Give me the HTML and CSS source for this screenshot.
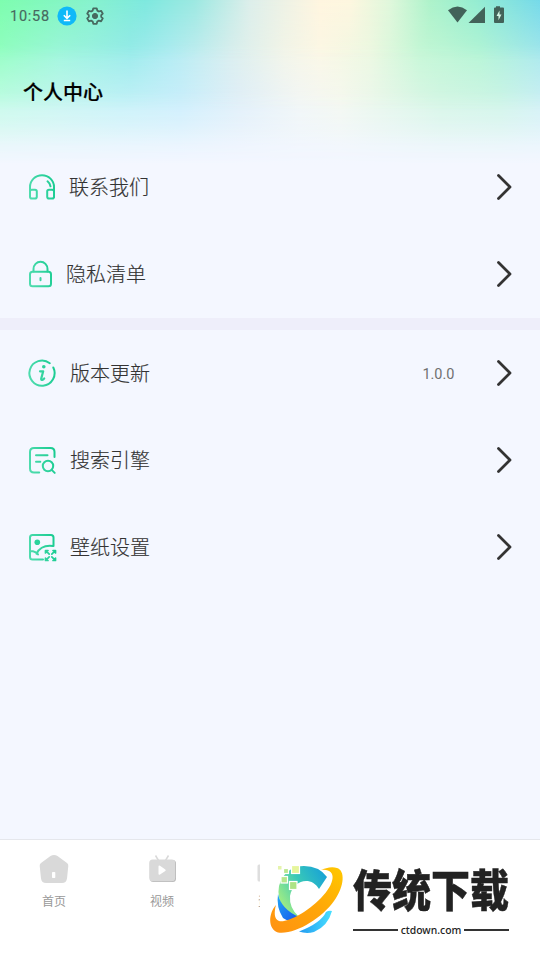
FILE: index.html
```html
<!DOCTYPE html>
<html lang="zh-CN">
<head>
<meta charset="utf-8">
<title>个人中心</title>
<link rel="stylesheet" href="styles.css">
</head>
<body>
<div class="screen">
  <div class="glow"><i class="g4"></i><i class="g3"></i><i class="g2"></i><i class="g1"></i></div>
  <header class="status">
    <span class="clock">10:58</span>
    <svg class="dl" width="20" height="20" viewBox="0 0 20 20"><circle cx="10" cy="10" r="9.600" fill="#0fb9f8"/><path d="M10 4.500v7.500M6.800 9.200l3.200 3.200 3.200-3.200M6.800 14.500h6.400" fill="none" stroke="#fff" stroke-width="1.600"/></svg>
    <svg class="gear" width="20" height="20" viewBox="0 0 20 20" fill="none" stroke="#47695f" stroke-width="1.800" stroke-linejoin="round"><path d="M8.300 2.300h3.400l.6 2.300 1.600.9 2.200-.7 1.700 2.900-1.600 1.500v1.700l1.600 1.500-1.700 2.900-2.200-.7-1.600.9-.6 2.300H8.300l-.6-2.300-1.600-.9-2.200.7-1.700-2.900 1.600-1.500V9.200L2.200 7.700l1.700-2.900 2.200.7 1.600-.9z"/><circle cx="10" cy="10" r="2.600" fill="#47695f" stroke-width="1"/></svg>
    <svg class="signals" width="58" height="18" viewBox="0 0 58 18" fill="#426259"><path d="M0 4.200Q9.500-3.200 19 4.200L9.500 16.500z"/><path d="M37 .8V17H20.500z"/><path d="M48 .2h4v1.300h3q1 0 1 1v13.500q0 1-1 1H47q-1 0-1-1V2.500q0-1 1-1h1z"/><path d="M51.500 4.500L48.500 10h2v4.200l3-5.700h-2z" fill="#d4f5e6"/></svg>
  </header>
  <h1>个人中心</h1>
  <svg class="defs" width="0" height="0"><defs><linearGradient id="green" gradientUnits="userSpaceOnUse" x1="0" y1="14" x2="28" y2="8"><stop stop-color="#4fdcae"/><stop offset="1" stop-color="#16cb90"/></linearGradient></defs></svg>
  <main>
    <section class="group">
      <div class="row contact">
        <svg class="icon" width="28" height="28" viewBox="0 0 28 28"><path d="M2 17.500V14a12 11.800 0 0 1 24 0v10M19.500 8.300q2.500 2 3 5"/><rect x="2" y="16.700" width="6.800" height="8.800" rx="1.800"/><rect x="19.200" y="16.700" width="6.800" height="8.800" rx="1.800"/></svg>
        <span class="label">联系我们</span>
        <svg class="arrow" width="16" height="28" viewBox="0 0 16 28"><path d="M2.500 2.500L14 14 2.500 25.500"/></svg>
      </div>
      <div class="row privacy">
        <svg class="icon" width="28" height="28" viewBox="0 0 28 28"><rect x="2" y="11.700" width="21" height="14.600" rx="2.500"/><path d="M5.500 11.500V9a7 7.200 0 0 1 14 0v2.500M12.500 18v2.200"/></svg>
        <span class="label">隐私清单</span>
        <svg class="arrow" width="16" height="28" viewBox="0 0 16 28"><path d="M2.500 2.500L14 14 2.500 25.500"/></svg>
      </div>
    </section>
    <section class="group second">
      <div class="row">
        <svg class="icon" width="28" height="28" viewBox="0 0 28 28"><path d="M21.800 4.200A12.600 12.600 0 1 0 25.300 8.500"/><path class="letter" d="M12 12.300h3.200l-2 7.300q-.2 1.600 1.200 1.300 1.100-.3 1.800-1.400"/><circle class="solid" cx="15.800" cy="7.700" r="1.800"/></svg>
        <span class="label">版本更新</span><span class="version">1.0.0</span>
        <svg class="arrow" width="16" height="28" viewBox="0 0 16 28"><path d="M2.500 2.500L14 14 2.500 25.500"/></svg>
      </div>
      <div class="row">
        <svg class="icon" width="28" height="28" viewBox="0 0 28 28"><path d="M11.200 26.500H6q-4 0-4-4V6q0-4 4-4h16.500q4 0 4 4v5M8 9.200h11.500M8 15.700h4.300"/><circle cx="20" cy="20" r="5.200"/><path d="M23.700 23.900l3 3"/></svg>
        <span class="label">搜索引擎</span>
        <svg class="arrow" width="16" height="28" viewBox="0 0 16 28"><path d="M2.500 2.500L14 14 2.500 25.500"/></svg>
      </div>
      <div class="row">
        <svg class="icon" width="28" height="28" viewBox="0 0 28 28"><path d="M15 26.500H4.500Q2 26.500 2 24V4.500Q2 2 4.500 2H23q2.500 0 2.500 2.500V13M2 18l3 .2q3 .5 5 3.200M8.500 20.800Q13 11.500 25 13"/><circle class="solid" cx="9.300" cy="9.300" r="2.800"/><path class="expand" d="M17.500 20v-2.500h2.500M17.700 17.700l3.500 3.500M25 17.500h2.500v2.500M27.300 17.700l-3.500 3.500M17.500 25v2.500h2.500M17.700 27.300l3.500-3.500M25 27.500h2.500V25M27.300 27.300l-3.500-3.500"/></svg>
        <span class="label">壁纸设置</span>
        <svg class="arrow" width="16" height="28" viewBox="0 0 16 28"><path d="M2.500 2.500L14 14 2.500 25.500"/></svg>
      </div>
    </section>
  </main>
  <nav>
    <div class="tab"><svg width="30" height="30" viewBox="0 0 30 30"><path d="M11.500 2Q15 .2 18.500 2L28 9q1.500 1.200 1.300 3L28 24.500Q27.300 29 23 29H7q-4.300 0-5-4.500L.7 12Q.5 10.200 2 9z" fill="#d9d9d9"/><rect x="13" y="18" width="3.300" height="6" rx=".8" fill="#fff"/></svg><span>首页</span></div>
    <div class="tab"><svg width="30" height="30" viewBox="0 0 30 30"><path d="M8.500 1.500l3 5M21.500 1.500l-3 5" stroke="#d9d9d9" stroke-width="1.500"/><rect x="3" y="6" width="26" height="22" rx="3.500" fill="#b8b8b8"/><rect x="2.200" y="5.500" width="26" height="21.700" rx="3.500" fill="#d9d9d9"/><path d="M11.500 12.500q0-1.500 1.500-.7l5.300 3.600q1 .9 0 1.600l-5.300 3.500q-1.500.8-1.500-.7z" fill="#fff"/></svg><span>视频</span></div>
    <div class="tab"><svg width="30" height="30" viewBox="0 0 30 30"><rect x="2.500" y="10.500" width="25" height="17" rx="1.500" fill="#dedede"/></svg><span>资讯</span></div>
    <div class="tab"></div><div class="tab"></div>
  </nav>
  <aside class="brand">
    <svg class="mark" width="80" height="80" viewBox="265 860 80 80">
      <defs>
        <linearGradient id="ring" x1="0" y1="1" x2="1" y2="0"><stop stop-color="#ff9212"/><stop offset=".5" stop-color="#ffa508"/><stop offset="1" stop-color="#ffc800"/></linearGradient>
        <linearGradient id="arc" x1="0" y1=".6" x2="1" y2="0"><stop stop-color="#9beb86"/><stop offset=".45" stop-color="#38c8b8"/><stop offset="1" stop-color="#139cdc"/></linearGradient>
        <linearGradient id="deep" x1="0" y1="0" x2="1" y2="1"><stop stop-color="#22a8f5"/><stop offset="1" stop-color="#1754eb"/></linearGradient>
        <linearGradient id="tail"><stop stop-color="#239af0"/><stop offset="1" stop-color="#48dfff"/></linearGradient>
      </defs>
      <path d="M327 877Q319 866 304 866Q289 866 281 880Q276 891 281 904Q287 914 299 917Q289 908 290 896C293 879 312 876 319 889z" fill="url(#arc)"/>
      <path d="M278 894Q281 909 299 917L294 921Q288 922 283 918Q276 907 278 894z" fill="url(#deep)"/>
      <path d="M276 905C268 914 268 929 278 932.500C295 935 322 918 334 901C345 886 345 870 337 868C332 866 325 868 321 870C337 868 336 883 321 898C306 913 287 923 279 921C274 919 274 912 276 905z" fill="url(#ring)"/>
      <path d="M299 931.500Q321 923 326 912Q329 910 332 911Q328 926 314 932Q306 934 299 931.500z" fill="url(#tail)"/>
      <g stroke="#fff" stroke-width="1.200"><rect x="291.500" y="865.500" width="8" height="8" fill="#e6f59b"/><rect x="281" y="876.500" width="6.500" height="6.500" fill="#b5e78d"/><rect x="289.500" y="881.500" width="7.500" height="8" fill="#ade386"/><rect x="283.500" y="868.500" width="5" height="5" fill="#b9e78e"/></g><rect x="278" y="866" width="3.500" height="3.500" fill="#e5f4ac"/>
    </svg>
    <div class="wordmark"><div class="name">传统下载</div><div class="site"><i></i><span>ctdown.com</span><i></i></div></div>
  </aside>
</div>
</body>
</html>
```

FILE: styles.css
```css
* { box-sizing: border-box; }
body { margin: 0; font-family: Roboto, "Noto Sans CJK SC", sans-serif; }
.screen { position: relative; width: 540px; height: 960px; overflow: hidden; background: #f4f7ff; display: flex; flex-direction: column; isolation: isolate; }
.glow { position: absolute; inset: 0 0 auto; height: 165px; z-index: -1; }
.glow i { position: absolute; inset: 0; }
.g1 { background: linear-gradient(90deg, #7dfdae 0, #86f2cc 90px, #7de8de 145px, #9ce8e1 195px, #dceeea 250px, #fff5df 320px, #fdf6df 350px, #dff7db 390px, #adf2ca 430px, #95edd1 475px, #75d9e9 540px); mask-image: linear-gradient(#000, transparent 60px); }
.g2 { background: linear-gradient(90deg, #93fec2 0, #9ef6dc 60px, #98ebea 130px, #b0ecf2 170px, #d9eeee 230px, #f3f5e8 285px, #fbf7e5 320px, #ecf8e1 370px, #c5f7d6 420px, #b5f5d5 480px, #a6e8ec 540px); mask-image: linear-gradient(#000 45px, transparent 110px); }
.g3 { background: linear-gradient(90deg, #c4fbe8 0, #c7f6f1 60px, #c5f2f8 120px, #cbeefc 180px, #e1eff9 240px, #f2f6f6 300px, #f5f8f0 340px, #e8f7eb 380px, #d5f6e5 440px, #cff5e7 500px, #d0f1f4 540px); mask-image: linear-gradient(#000 92px, rgba(0,0,0,.6) 122px, rgba(0,0,0,.18) 145px, transparent 164px); }
.g4 { background: linear-gradient(#eef7fd 110px, #f2f7ff 145px, #f4f7ff); }
.status { height: 32px; padding: 0 34px 0 10px; display: flex; align-items: center; color: #47695f; }
.clock { font-size: 14.500px; letter-spacing: .75px; width: 47px; -webkit-text-stroke: .15px; }
.gear { margin-left: 8px; }
.signals { margin-left: auto; margin-top: -2px; }
h1 { margin: 45px 0 0 23px; height: 66px; font-size: 20px; line-height: 32px; font-weight: 500; -webkit-text-stroke: .2px; color: #000; }
.defs { position: absolute; }
.second { border-top: 12px solid #eeeefa; }
.row { height: 87px; padding: 0 28px; display: flex; align-items: center; color: #333; }
.group:first-child { padding-top: 1px; height: 175px; }
.icon { fill: none; stroke: url(#green); stroke-width: 2; stroke-linecap: round; stroke-linejoin: round; overflow: visible; flex: none; margin-top: -1px; margin-left: -.5px; margin-right: .5px; }
.second .row:first-child .icon { margin-left: 0; margin-right: 0; }
.solid { fill: #2bd39c; stroke: none; }
.expand { stroke-width: 1.700; }
.letter { stroke-width: 2.200; }
.label { margin: -2px 0 0 14px; font-family: "Noto Sans CJK SC", sans-serif; font-size: 20px; line-height: 30px; font-weight: 300; -webkit-text-stroke: .15px; }
.contact .label { margin-left: 13px; }
.privacy .label { margin-left: 10px; }
.version { margin: 2px 0 0 auto; font-size: 14.500px; color: #707070; }
.arrow { margin-left: auto; margin-top: -1px; fill: none; stroke: #333; stroke-width: 2.800; stroke-linecap: round; stroke-linejoin: round; }
.version + .arrow { margin-left: 41.500px; }
nav { margin-top: auto; height: 121px; border-top: 1px solid #e5e7ec; background: #fff; display: grid; grid-template-columns: repeat(5, 1fr); }
.tab { display: flex; flex-direction: column; align-items: center; padding-top: 14px; font-size: 12px; line-height: 18px; color: #999; }
.tab span { margin-top: 9px; }
.brand { position: absolute; left: 260px; top: 852px; width: 270px; height: 92px; padding: 8px 0 0 5px; background: #fff; display: flex; }
.mark { flex: none; }
.wordmark { width: 156px; margin-left: 8px; color: #222; }
.name { height: 64px; padding-top: 1px; font: 900 39px/54px "Noto Sans CJK SC", sans-serif; white-space: nowrap; transform: scaleY(1.140); transform-origin: 50% 50%; -webkit-text-stroke: .4px; }
.site { display: flex; align-items: center; gap: 3px; font: 500 10.400px/12px "Noto Sans", sans-serif; }
.site i { flex: 1; height: 2px; background: #333; }
```
